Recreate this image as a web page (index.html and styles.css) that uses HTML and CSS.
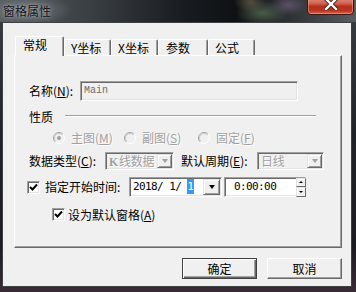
FILE: index.html
```html
<!DOCTYPE html>
<html lang="zh-CN">
<head>
  <meta charset="UTF-8" />
  <title>窗格属性</title>
  <link rel="stylesheet" href="styles.css">
</head>
<body>
  <div class="window">
    <div class="titlebar">
      <span class="title">窗格属性</span>
      <span class="close">
        <svg width="14" height="11" viewBox="0 0 14 11">
          <path d="M2 0 L12 10 M12 0 L2 10" stroke="#3a2020" stroke-width="4.2" stroke-linecap="square" fill="none"/>
          <path d="M2 0 L12 10 M12 0 L2 10" stroke="#fff" stroke-width="2.4" stroke-linecap="square" fill="none"/>
        </svg>
      </span>
    </div>

    <div class="client">
      <div class="tabs">
        <div class="tab active">常规</div>
        <div class="tab tab-y">Y坐标</div>
        <div class="tab tab-x">X坐标</div>
        <div class="tab tab-param">参数</div>
        <div class="tab tab-formula">公式</div>
      </div>

      <div class="panel">
        <div class="row name-row">
          <span class="lbl w-name">名称(<u>N</u>):</span>
          <div class="field name-field">Main</div>
        </div>

        <div class="row group-row">
          <span class="lbl w-group">性质</span>
          <span class="etch"></span>
        </div>

        <div class="row radio-row">
          <span class="radio-item ri-1">
            <svg class="radio" width="12" height="12" viewBox="0 0 12 12">
              <circle cx="6" cy="6" r="5.5" fill="#f0f0f0" stroke="#fff"/>
              <path d="M2.1 9.9 A5.5 5.5 0 0 1 9.9 2.1" fill="none" stroke="#a0a0a0"/>
              <path d="M2.8 9.2 A4.5 4.5 0 0 1 9.2 2.8" fill="none" stroke="#c8c8c8"/>
              <circle cx="6" cy="6" r="2" fill="#a0a0a0"/>
            </svg>
            <span class="dis">主图(<u>M</u>)</span>
          </span>
          <span class="radio-item ri-2">
            <svg class="radio" width="12" height="12" viewBox="0 0 12 12">
              <circle cx="6" cy="6" r="5.5" fill="#f0f0f0" stroke="#fff"/>
              <path d="M2.1 9.9 A5.5 5.5 0 0 1 9.9 2.1" fill="none" stroke="#a0a0a0"/>
              <path d="M2.8 9.2 A4.5 4.5 0 0 1 9.2 2.8" fill="none" stroke="#c8c8c8"/>
            </svg>
            <span class="dis">副图(<u>S</u>)</span>
          </span>
          <span class="radio-item">
            <svg class="radio" width="12" height="12" viewBox="0 0 12 12">
              <circle cx="6" cy="6" r="5.5" fill="#f0f0f0" stroke="#fff"/>
              <path d="M2.1 9.9 A5.5 5.5 0 0 1 9.9 2.1" fill="none" stroke="#a0a0a0"/>
              <path d="M2.8 9.2 A4.5 4.5 0 0 1 9.2 2.8" fill="none" stroke="#c8c8c8"/>
            </svg>
            <span class="dis">固定(<u>F</u>)</span>
          </span>
        </div>

        <div class="row combo-row">
          <span class="lbl w-type">数据类型(<u>C</u>):</span>
          <div class="field combo combo-type">
            <span class="combo-text dis"><b class="k">K</b>线数据</span>
            <span class="drop"><i class="arrow arrow-dis"></i></span>
          </div>
          <span class="lbl w-period">默认周期(<u>E</u>):</span>
          <div class="field combo combo-period">
            <span class="combo-text dis">日线</span>
            <span class="drop"><i class="arrow arrow-dis"></i></span>
          </div>
        </div>

        <div class="row date-row">
          <span class="check start-check">
            <svg width="9" height="9" viewBox="0 0 9 9"><path d="M1 4 L3.5 6.5 L8 1.5" stroke="#000" stroke-width="2" fill="none"/></svg>
          </span>
          <span class="lbl w-start">指定开始时间:</span>
          <div class="field date-field">
            <span class="mono">2018/ 1/ <b class="sel">1</b></span>
            <span class="drop date-drop"><i class="arrow"></i></span>
          </div>
          <div class="field time-field">
            <span class="mono">0:00:00</span>
            <span class="spin">
              <span class="spin-btn"><i class="tri-up"></i></span>
              <span class="spin-btn"><i class="tri-down"></i></span>
            </span>
          </div>
        </div>

        <div class="row default-row">
          <span class="check">
            <svg width="9" height="9" viewBox="0 0 9 9"><path d="M1 4 L3.5 6.5 L8 1.5" stroke="#000" stroke-width="2" fill="none"/></svg>
          </span>
          <span class="lbl default-lbl">设为默认窗格(<u>A</u>)</span>
        </div>
      </div>

      <div class="buttons">
        <button class="btn btn-default">确定</button>
        <button class="btn">取消</button>
      </div>
    </div>
  </div>
</body>
</html>
```

FILE: styles.css
```css
* {
  box-sizing: border-box;
}
html, body {
  margin: 0;
  width: 356px;
  height: 292px;
  overflow: hidden;
}
body {
  background: #1c1e22;
  font-family: "Noto Sans CJK SC", "Noto Sans CJK JP", sans-serif;
  font-size: 12px;
  line-height: 14px;
  color: #000;
}
u {
  text-decoration: underline;
}
.window {
  width: 356px;
  height: 292px;
  display: flex;
  flex-direction: column;
  background: linear-gradient(#3b4044, #202328 45%, #1d1b22 85%, #3a2c36);
}
.titlebar {
  height: 22px;
  flex: none;
  display: flex;
  justify-content: space-between;
  align-items: flex-start;
  padding-left: 3px;
  background:
    radial-gradient(ellipse 26px 12px at 262px 13px, rgba(110,140,100,0.55), transparent),
    radial-gradient(ellipse 18px 10px at 288px 5px, rgba(150,120,170,0.45), transparent),
    radial-gradient(ellipse 16px 10px at 250px 2px, rgba(170,150,110,0.4), transparent),
    radial-gradient(ellipse 44px 16px at 28px 10px, rgba(140,146,152,0.6), transparent),
    linear-gradient(90deg, #565b60 0%, #3a3f44 25%, #181b1f 52%, #0f1215 66%, #34373a 84%, #5a5c5e 100%);
}
.title {
  margin-top: 3px;
  line-height: 16px;
  color: #15131b;
  text-shadow: 0 0 3px rgba(200,205,210,0.8), 0 0 8px rgba(180,185,190,0.5);
}
.close {
  width: 47px;
  height: 20px;
  margin-top: -5px;
  margin-right: 2px;
  display: flex;
  justify-content: center;
  align-items: center;
  border: 1px solid #3a1410;
  border-radius: 0 0 4px 4px;
  background: linear-gradient(#e7a090 0%, #d26450 40%, #b8301c 58%, #b83420 80%, #d2644c 100%);
  box-shadow: inset 0 0 0 1px rgba(255,190,170,0.45);
}
.close svg {
  margin-top: -1px;
}

.client {
  width: 350px;
  height: 265px;
  margin-left: 2px;
  border: 1px solid #3e4144;
  background: #f0f0f0;
}

.tabs {
  display: flex;
  align-items: flex-end;
  height: 19px;
  margin-top: 13px;
  padding-left: 12px;
}
.tab {
  height: 16px;
  padding: 1px 0 0 6px;
  border-top: 1px solid #fff;
  border-left: 1px solid #fff;
  border-right: 1px solid #696969;
  border-radius: 2px 2px 0 0;
  box-shadow: inset -1px 0 #a0a0a0;
  background: #f0f0f0;
  white-space: nowrap;
}
.tab.active {
  width: 49px;
  height: 20px;
  margin-bottom: -1px;
  padding-left: 7px;
  position: relative;
  z-index: 1;
}
.tab-y, .tab-x, .tab-formula {
  width: 47px;
}
.tab-param {
  width: 50px;
  padding-left: 7px;
}

.panel {
  width: 328px;
  height: 193px;
  margin-left: 11px;
  padding: 25px 0 0 14px;
  border-top: 1px solid #fff;
  border-left: 1px solid #fff;
  border-right: 1px solid #696969;
  border-bottom: 1px solid #696969;
  box-shadow: inset -1px -1px #a0a0a0;
}
.row {
  display: flex;
  align-items: center;
}
.lbl {
  flex: none;
  white-space: nowrap;
}
.dis {
  color: #a0a0a0;
  text-shadow: 1px 1px #fff;
}

.field {
  flex: none;
  border: 1px solid;
  border-color: #a0a0a0 #fff #fff #a0a0a0;
  box-shadow: inset 1px 1px #696969, inset -1px -1px #e3e3e3;
  display: flex;
  align-items: center;
}

.name-row {
  height: 20px;
}
.w-name {
  width: 51px;
}
.name-field {
  width: 218px;
  height: 20px;
  padding-left: 3px;
  background: #f0f0f0;
  color: #6d6d6d;
  font-family: "Liberation Mono", monospace;
  font-size: 10px;
}

.group-row {
  height: 16px;
  margin-top: 8px;
  align-items: flex-start;
}
.w-group {
  width: 36px;
  margin-top: 1px;
}
.etch {
  width: 251px;
  height: 2px;
  margin-top: 6px;
  border-top: 1px solid #a0a0a0;
  border-bottom: 1px solid #fff;
}

.radio-row {
  height: 14px;
  margin-top: 6px;
  padding-left: 24px;
}
.radio-item {
  display: flex;
  align-items: center;
  white-space: nowrap;
}
.ri-1 {
  width: 71px;
}
.ri-2 {
  width: 74px;
}
.radio {
  flex: none;
  margin-right: 6px;
}

.combo-row {
  height: 18px;
  margin-top: 7px;
}
.w-type {
  width: 76px;
}
.w-period {
  width: 76px;
  margin-left: 7px;
}
.combo {
  height: 18px;
  padding: 0 1px 0 3px;
  background: #f0f0f0;
}
.combo-type {
  width: 69px;
}
.combo-period {
  width: 67px;
}
.combo-text {
  flex: 1;
  min-width: 0;
  white-space: nowrap;
  letter-spacing: -0.3px;
}
.k {
  font-family: "Liberation Serif", serif;
  font-weight: bold;
  margin-right: 1px;
}
.drop {
  flex: none;
  width: 15px;
  height: 14px;
  display: flex;
  justify-content: center;
  align-items: center;
  background: #f0f0f0;
  border: 1px solid;
  border-color: #e3e3e3 #696969 #696969 #e3e3e3;
  box-shadow: inset 1px 1px #fff, inset -1px -1px #a0a0a0;
}
.arrow {
  width: 0;
  height: 0;
  border-left: 3.5px solid transparent;
  border-right: 3.5px solid transparent;
  border-top: 4px solid #000;
}
.arrow-dis {
  border-top-color: #a0a0a0;
}

.date-row {
  height: 20px;
  margin-top: 7px;
}
.check {
  flex: none;
  width: 13px;
  height: 13px;
  display: flex;
  justify-content: center;
  align-items: center;
  background: #fff;
  border: 1px solid;
  border-color: #a0a0a0 #fff #fff #a0a0a0;
  box-shadow: inset 1px 1px #696969, inset -1px -1px #e3e3e3;
}
.start-check {
  margin-left: -2px;
}
.w-start {
  width: 84px;
  margin-left: 5px;
}
.mono {
  flex: 1;
  font-family: "DejaVu Sans Mono", monospace;
  font-size: 11px;
  letter-spacing: -0.6px;
  white-space: pre;
}
.sel {
  font-weight: normal;
  background: #3399ff;
  color: #fff;
  padding: 1px 0.6px 1px 0;
}
.date-field {
  width: 93px;
  height: 20px;
  margin-right: 2px;
  padding: 0 1px 0 3px;
  background: #fff;
}
.date-drop {
  width: 17px;
  height: 16px;
}
.time-field {
  width: 82px;
  height: 20px;
  padding-left: 9px;
  background: #fff;
}
.spin {
  flex: none;
  width: 10px;
  height: 19px;
  margin-right: -1px;
  display: flex;
  flex-direction: column;
}
.spin-btn {
  flex: 1;
  display: flex;
  justify-content: center;
  align-items: center;
  background: #f0f0f0;
  border: 1px solid;
  border-color: #e3e3e3 #696969 #696969 #e3e3e3;
  box-shadow: inset 1px 1px #fff;
}
.tri-up {
  width: 0;
  height: 0;
  border-left: 2px solid transparent;
  border-right: 2px solid transparent;
  border-bottom: 2px solid #000;
}
.tri-down {
  width: 0;
  height: 0;
  border-left: 2px solid transparent;
  border-right: 2px solid transparent;
  border-top: 2px solid #000;
}

.default-row {
  height: 13px;
  margin-top: 11px;
  padding-left: 23px;
}
.default-lbl {
  margin-left: 3px;
}

.buttons {
  width: 328px;
  margin: 10px 0 0 11px;
  display: flex;
  justify-content: flex-end;
  gap: 10px;
}
.btn {
  width: 75px;
  height: 21px;
  padding: 0;
  font-family: inherit;
  font-size: 12px;
  color: #000;
  background: #f0f0f0;
  border: 1px solid;
  border-color: #fff #696969 #696969 #fff;
  box-shadow: inset -1px -1px #a0a0a0;
  border-radius: 0;
}
.btn-default {
  border-color: #404040;
  box-shadow: inset 1px 1px #fff, inset -1px -1px #696969, inset -2px -2px #a0a0a0;
}
```
